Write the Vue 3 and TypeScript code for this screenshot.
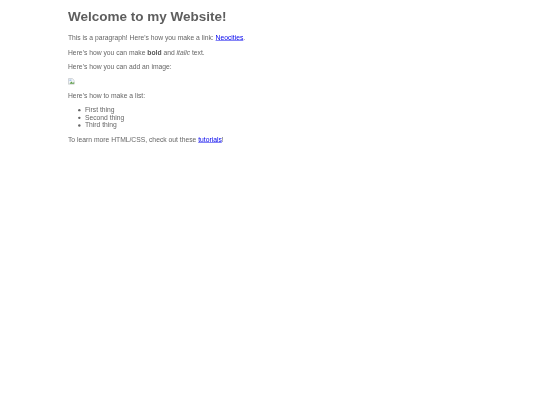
<script setup lang="ts">
const items: string[] = ['First thing', 'Second thing', 'Third thing']
</script>

<template>
  <main class="page">
    <h1 class="title">Welcome to my Website!</h1>
    <p>This is a paragraph! Here's how you make a link: <a href="#">Neocities</a>.</p>
    <p>Here's how you can make <strong>bold</strong> and <em>italic</em> text.</p>
    <p>Here's how you can add an image:</p>
    <svg class="broken" width="14" height="14" viewBox="0 0 14 14" aria-label="broken image">
      <path d="M1 1h8l4 4v8H1z" fill="#f2f5f8" stroke="#b4b8bd" stroke-width="1.2" />
      <path d="M3 12l4-5 3 3 3-2v4z" fill="#5f9e4a" />
      <path d="M3 3h4v3H3z" fill="#a9c6ea" />
    </svg>
    <p>Here's how to make a list:</p>
    <ul>
      <li v-for="item in items" :key="item">
        <span class="bullet"></span>
        <span>{{ item }}</span>
      </li>
    </ul>
    <p>To learn more HTML/CSS, check out these <a href="#">tutorials</a>!</p>
  </main>
</template>

<style scoped>
.page {
  width: 840px;
  margin: 0 0 0 67.5px;
  font-family: "Liberation Sans", Arial, sans-serif;
  font-size: 14px;
  line-height: 15.8px;
  color: #666;
  transform: scale(0.482);
  transform-origin: 0 0;
  filter: blur(0.85px);
}
.title {
  margin: 0;
  padding: 17.6px 0 7.6px;
  font-size: 28px;
  line-height: 32px;
  font-weight: bold;
  color: #5e5e5e;
}
p {
  margin: 14.3px 0;
}
a {
  color: #0000ee;
}
strong {
  color: #555;
}
.broken {
  display: block;
  margin: 13.5px 0 14.9px;
}
ul {
  margin: 14.3px 0;
  padding: 0 0 0 20.7px;
  list-style: none;
}
li {
  display: flex;
  align-items: center;
  gap: 9.3px;
}
.bullet {
  width: 5.2px;
  height: 5.2px;
  border-radius: 50%;
  background: #666;
}
</style>

<style>
html, body { background: #fff; }
</style>
